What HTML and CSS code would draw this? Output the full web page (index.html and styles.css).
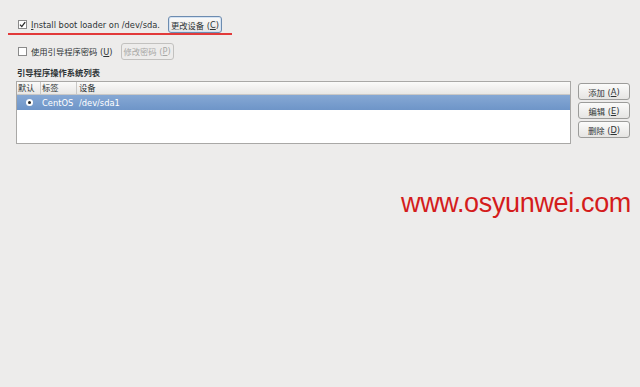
FILE: index.html
```html
<!DOCTYPE html>
<html>
<head>
<meta charset="utf-8">
<link rel="stylesheet" href="styles.css">
</head>
<body>
<div class="page">
  <div class="row r1">
    <span class="check checked"><svg width="7" height="7" viewBox="0 0 7 7"><path d="M1 3.6 L2.8 5.6 L6.2 1.2" fill="none" stroke="#2a2a2a" stroke-width="1.3"/></svg></span>
    <span class="lbl"><u>I</u>nstall boot loader on /dev/sda.</span>
    <button class="btn b-change">更改设备 (<u>C</u>)</button>
  </div>
  <div class="redline"></div>
  <div class="row r2">
    <span class="check"></span>
    <span class="lbl">使用引导程序密码 (<u>U</u>)</span>
    <button class="btn disabled">修改密码 (<u>P</u>)</button>
  </div>
  <div class="title">引导程序操作系统列表</div>
  <div class="listarea">
    <div class="list">
      <div class="hdr">
        <span class="c1">默认</span><span class="c2">标签</span><span class="c3">设备</span>
      </div>
      <div class="sel">
        <span class="c1"><span class="radio"></span></span><span class="c2">CentOS</span><span class="c3">/dev/sda1</span>
      </div>
    </div>
    <div class="btns">
      <button class="btn side">添加 (<u>A</u>)</button>
      <button class="btn side">编辑 (<u>E</u>)</button>
      <button class="btn side">删除 (<u>D</u>)</button>
    </div>
  </div>
  <div class="watermark">www.osyunwei.com</div>
</div>
</body>
</html>
```
FILE: styles.css
```css
html, body {
  margin: 0;
  padding: 0;
  background: #edeceb;
}
body {
  width: 640px;
  height: 387px;
  overflow: hidden;
  font-family: "DejaVu Sans", "Noto Sans CJK SC", sans-serif;
  font-size: 8.3px;
  color: #2e3436;
}
.page {
  position: relative;
  height: 387px;
}
.row {
  display: flex;
  align-items: center;
  padding-left: 18px;
}
.r1 {
  padding-top: 16px;
  height: 17px;
}
.r2 {
  margin-top: 7px;
  height: 18px;
}
.check {
  width: 7px;
  height: 7px;
  border: 1px solid #8a8a8a;
  background: #fff;
  display: flex;
  align-items: center;
  justify-content: center;
  margin-right: 4px;
}
.lbl {
  white-space: nowrap;
  margin-right: 8px;
}
.btn {
  font-family: "DejaVu Sans", "Noto Sans CJK SC", sans-serif;
  font-size: 8.3px;
  color: #2e3436;
  background: linear-gradient(#fbfbfa, #e6e5e3);
  border: 1px solid #9c9c9a;
  border-radius: 3px;
  padding: 0;
  height: 17px;
  white-space: nowrap;
  display: flex;
  align-items: center;
  justify-content: center;
}
.b-change {
  width: 54px;
  border-color: #6d8cb0;
  box-shadow: inset 0 0 0 1px #d4e2f2;
}
.disabled {
  color: #a8a8a6;
  background: #edeceb;
  border-color: #c2c1bf;
  width: 53px;
}
.redline {
  margin: 0 0 0 8px;
  width: 224px;
  height: 2px;
  background: #e23a3a;
}
.title {
  margin: 8px 0 0 17px;
  font-weight: bold;
  height: 11px;
  line-height: 11px;
}
.listarea {
  display: flex;
  margin: 2px 0 0 16px;
  gap: 7px;
}
.list {
  width: 553px;
  height: 61px;
  border: 1px solid #a9a8a6;
  background: #fff;
}
.hdr {
  display: flex;
  height: 12px;
  line-height: 12px;
  background: linear-gradient(#fafaf9, #e8e7e5);
  border-bottom: 1px solid #c9c8c6;
}
.hdr span {
  border-right: 1px solid #c9c8c6;
}
.hdr .c1 { width: 22px; padding-left: 1px; }
.hdr .c2 { width: 34px; padding-left: 1px; }
.hdr .c3 { flex: 1; padding-left: 2px; border-right: none; }
.sel {
  display: flex;
  align-items: center;
  height: 15px;
  background: linear-gradient(#86a8d4, #6e95c8);
  color: #fff;
}
.sel .c1 {
  width: 24px;
  display: flex;
  justify-content: center;
}
.sel .c2 { width: 36px; padding-left: 1px; }
.sel .c3 { flex: 1; padding-left: 1px; }
.radio {
  width: 7px;
  height: 7px;
  border-radius: 50%;
  background: #fff;
  position: relative;
}
.radio::after {
  content: "";
  position: absolute;
  left: 2px;
  top: 2px;
  width: 3px;
  height: 3px;
  border-radius: 50%;
  background: #222;
}
.btns {
  display: flex;
  flex-direction: column;
  gap: 2px;
  padding-top: 2px;
}
.side {
  width: 52px;
}
.watermark {
  position: absolute;
  left: 401px;
  top: 188px;
  font-family: "Liberation Sans", Arial, sans-serif;
  font-size: 27px;
  letter-spacing: -0.35px;
  color: #d41c1c;
}
```
